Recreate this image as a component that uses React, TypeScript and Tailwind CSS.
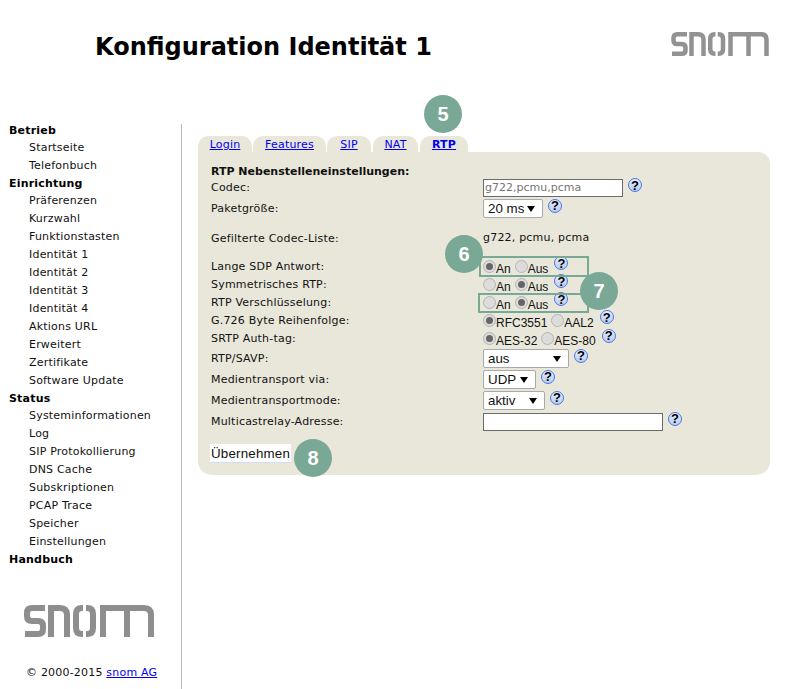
import React from 'react';

const sidebar = [
  { title: 'Betrieb', items: ['Startseite', 'Telefonbuch'] },
  {
    title: 'Einrichtung',
    items: ['Präferenzen', 'Kurzwahl', 'Funktionstasten', 'Identität 1', 'Identität 2', 'Identität 3', 'Identität 4', 'Aktions URL', 'Erweitert', 'Zertifikate', 'Software Update'],
  },
  {
    title: 'Status',
    items: ['Systeminformationen', 'Log', 'SIP Protokollierung', 'DNS Cache', 'Subskriptionen', 'PCAP Trace', 'Speicher', 'Einstellungen'],
  },
  { title: 'Handbuch', items: [] as string[] },
];

const tabs = [
  { label: 'Login', cls: 'w-[54px] mr-[1px]' },
  { label: 'Features', cls: 'w-[73px] mr-[1px]' },
  { label: 'SIP', cls: 'w-[44px] mr-[2px]' },
  { label: 'NAT', cls: 'w-[45px] mr-[2px]' },
  { label: 'RTP', cls: 'w-[48px]' },
];

function Logo({ className }: { className: string }) {
  return (
    <svg viewBox="0 0 130 32" className={className} fill="none" stroke="currentColor" strokeWidth="6">
      <path d="M21 3H8Q3 3 3 8V11Q3 16 8 16H14Q19 16 19 21V24Q19 29 14 29H1" />
      <path d="M27 32V3H36Q43 3 43 10V32" />
      <path d="M59 3H58Q52 3 52 9V23Q52 29 58 29H59" />
      <path d="M62 3H63Q69 3 69 9V23Q69 29 63 29H62" />
      <path d="M79 32V3H120Q127 3 127 10V32M103 3V32" />
    </svg>
  );
}

function Help() {
  return (
    <span className="inline-flex h-[14px] w-[14px] shrink-0 items-center justify-center rounded-full border border-[#4a76e0] bg-linear-to-b from-[#e8eefc] to-[#b8ccf4] font-['Liberation_Sans',sans-serif] text-[13px] font-bold leading-none tracking-normal text-black">
      ?
    </span>
  );
}

function Radio({ on }: { on?: boolean }) {
  return (
    <span className="flex h-[13px] w-[13px] shrink-0 items-center justify-center rounded-full border border-[#b4b4b4] bg-[#dcdcdc]">
      {on && <span className="h-[7px] w-[7px] rounded-full bg-[#666666]" />}
    </span>
  );
}

function Radios({ options }: { options: [string, boolean][] }) {
  return (
    <div className="flex items-center">
      {options.map(([label, on]) => (
        <span key={label} className="mr-[4px] flex items-center">
          <Radio on={on} />
          <span className="mt-[5px] font-['Liberation_Sans',sans-serif] text-[12px] leading-none tracking-normal">{label}</span>
        </span>
      ))}
      <span className="-mt-[7px] ml-[2px]">
        <Help />
      </span>
    </div>
  );
}

function Select({ value, width }: { value: string; width: string }) {
  return (
    <div className="flex items-center gap-[5px]">
      <div className={`flex h-[19px] items-center justify-between rounded-[2px] border border-[#a9a9a9] bg-white pl-[4px] pr-[7px] font-['Liberation_Sans',sans-serif] text-[13.33px] leading-none tracking-normal text-[#111] ${width}`}>
        <span>{value}</span>
        <svg viewBox="0 0 8 6" className="h-[6px] w-[8px]" fill="black">
          <path d="M0 0H8L4 6Z" />
        </svg>
      </div>
      <span className="-mt-[7px]">
        <Help />
      </span>
    </div>
  );
}

function Input({ value, width }: { value?: string; width: string }) {
  return (
    <div className="flex items-center gap-[5px]">
      <div className={`flex h-[18px] items-center border border-[#6b6b6b] bg-white px-[1px] text-[11px] tracking-normal text-[#757575] ${width}`}>{value}</div>
      <span className="-mt-[7px]">
        <Help />
      </span>
    </div>
  );
}

function Row({ label, height, labelClass = 'pt-[2px]', children }: { label: string; height: string; labelClass?: string; children: React.ReactNode }) {
  return (
    <div className={`flex items-center ${height}`}>
      <div className={`w-[273px] shrink-0 pl-[1px] text-[11px] ${labelClass}`}>{label}</div>
      {children}
    </div>
  );
}

function Badge({ n, className }: { n: number; className: string }) {
  return (
    <div className={`absolute flex h-[38px] w-[38px] items-center justify-center rounded-full bg-[#7aa896] font-['Liberation_Sans',sans-serif] text-[20px] font-bold tracking-normal text-white ${className}`}>
      {n}
    </div>
  );
}

export default function App() {
  return (
    <div className="relative h-[689px] w-[800px] overflow-hidden bg-white font-['DejaVu_Sans',sans-serif] tracking-[0.2px] text-[#111]">
      <header className="flex h-[122px] items-start">
        <h1 className="ml-[95px] mt-[32px] w-[338px] shrink-0 text-[24px] font-bold leading-[30px] tracking-normal text-black">Konfiguration Identität 1</h1>
        <Logo className="ml-[237px] mt-[32px] h-[24px] w-[100px] text-[#929292]" />
      </header>

      <div className="flex h-[567px]">
        <aside className="flex w-[182px] shrink-0 flex-col">
          <nav className="pl-[9px] text-[11px] leading-[18px]">
            {sidebar.map((group) => (
              <div key={group.title}>
                <div className="-mb-[1px] h-[18px] font-bold text-black">{group.title}</div>
                {group.items.map((item) => (
                  <div key={item} className="pl-[20px]">{item}</div>
                ))}
              </div>
            ))}
          </nav>
          <Logo className="ml-[24px] mt-[37px] h-[32px] w-[130px] text-[#8e8e8e]" />
          <p className="ml-[26px] mt-[28px] text-[11px] leading-[16px]">
            © 2000-2015 <a className="text-[#0000ee] underline">snom AG</a>
          </p>
        </aside>

        <main className="-ml-[1px] mt-[2px] border-l border-[#b9b9b9] pl-[16px] pt-[12px]">
          <div className="flex h-[16px] items-stretch">
            {tabs.map((tab) => (
              <div key={tab.label} className={`flex items-center justify-center rounded-t-[10px] bg-[#e9e7da] pt-[1px] ${tab.cls}`}>
                <a className={`text-[11px] leading-none text-[#0000ee] underline ${tab.label === 'RTP' ? 'font-bold' : ''}`}>{tab.label}</a>
              </div>
            ))}
          </div>
          <section className="h-[323px] w-[572px] rounded-b-[14px] rounded-tr-[12px] bg-[#e9e7da] pl-[12px] pt-[13px]">
            <div className="h-[13px] pl-[1px] text-[11px] font-bold leading-[13px] tracking-normal">RTP Nebenstelleneinstellungen:</div>
            <Row label="Codec:" height="h-[20px]" labelClass=""><Input value="g722,pcmu,pcma" width="w-[140px]" /></Row>
            <Row label="Paketgröße:" height="h-[21px]"><Select value="20 ms" width="w-[60px]" /></Row>
            <div className="h-[10px]" />
            <Row label="Gefilterte Codec-Liste:" height="h-[19px]"><span className="text-[11px]">g722, pcmu, pcma</span></Row>
            <div className="h-[9px]" />
            <Row label="Lange SDP Antwort:" height="h-[18px]"><Radios options={[['An', true], ['Aus', false]]} /></Row>
            <Row label="Symmetrisches RTP:" height="h-[18px]"><Radios options={[['An', false], ['Aus', true]]} /></Row>
            <Row label="RTP Verschlüsselung:" height="h-[18px]"><Radios options={[['An', false], ['Aus', true]]} /></Row>
            <Row label="G.726 Byte Reihenfolge:" height="h-[18px]"><Radios options={[['RFC3551', true], ['AAL2', false]]} /></Row>
            <Row label="SRTP Auth-tag:" height="h-[19px]"><Radios options={[['AES-32', true], ['AES-80', false]]} /></Row>
            <Row label="RTP/SAVP:" height="h-[21px]"><Select value="aus" width="w-[86px]" /></Row>
            <Row label="Medientransport via:" height="h-[21px]"><Select value="UDP" width="w-[53px]" /></Row>
            <Row label="Medientransportmode:" height="h-[21px]"><Select value="aktiv" width="w-[62px]" /></Row>
            <Row label="Multicastrelay-Adresse:" height="h-[21px]"><Input width="w-[180px]" /></Row>
            <button className="mt-[12px] h-[19px] w-[81px] border-b border-[#cfdcf6] bg-white font-['Liberation_Sans',sans-serif] text-[13.33px] text-[#111]">
              Übernehmen
            </button>
          </section>
        </main>
      </div>

      {/* annotations sitting on top of the form */}
      <div className="absolute left-[479px] top-[256px] h-[21px] w-[110px] border-2 border-[#7aa896]" />
      <div className="absolute left-[478px] top-[293px] h-[20px] w-[111px] border-2 border-[#7aa896]" />
      <Badge n={5} className="left-[424px] top-[95px]" />
      <Badge n={6} className="left-[445px] top-[235px]" />
      <Badge n={7} className="left-[580px] top-[272px]" />
      <Badge n={8} className="left-[294px] top-[439px]" />
    </div>
  );
}
